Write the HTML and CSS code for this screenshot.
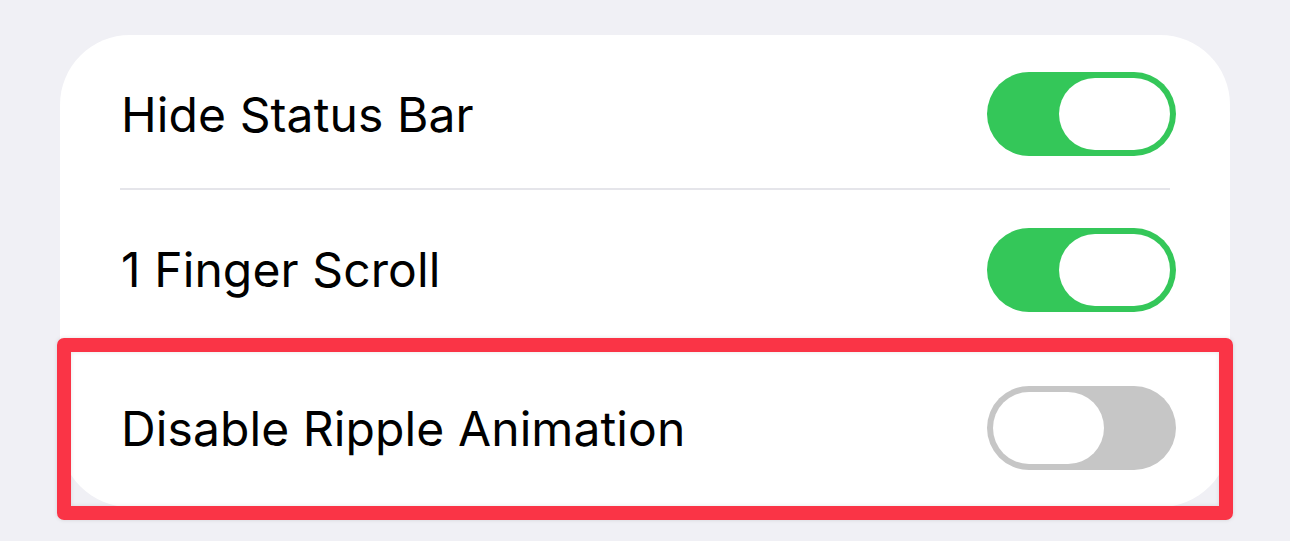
FILE: index.html
```html
<!DOCTYPE html>
<html>
<head>
<meta charset="utf-8">
<link rel="stylesheet" href="styles.css">
</head>
<body>
<div class="page">
  <div class="card">
    <div class="row row-first">
      <span class="label">Hide Status Bar</span>
      <span class="toggle on"><span class="knob"></span></span>
    </div>
    <div class="sep"></div>
    <div class="row row-mid">
      <span class="label">1 Finger Scroll</span>
      <span class="toggle on"><span class="knob"></span></span>
    </div>
    <div class="row row-last">
      <span class="label">Disable Ripple Animation</span>
      <span class="toggle off"><span class="knob"></span></span>
    </div>
  </div>
  <div class="highlight"></div>
</div>
</body>
</html>
```
FILE: styles.css
```css
html, body {
  margin: 0;
  padding: 0;
  background: #f0f0f5;
}
body {
  width: 1290px;
  height: 541px;
  overflow: hidden;
  font-family: "Inter", "Noto Sans", sans-serif;
}
.page {
  position: relative;
  padding: 35px 60px 0 60px;
}
.card {
  background: #ffffff;
  border-radius: 70px;
  display: flex;
  flex-direction: column;
}
.row {
  display: flex;
  align-items: center;
  justify-content: space-between;
  padding: 0 54px 0 61px;
}
.row-first {
  height: 148px;
  padding-top: 5px;
}
.row-mid {
  height: 159px;
}
.row-last {
  height: 158px;
}
.sep {
  height: 2px;
  background: #e5e5ea;
  margin: 0 60px;
}
.label {
  font-size: 48px;
  color: #000;
  letter-spacing: 0.1px;
}
.toggle {
  width: 189px;
  height: 84px;
  border-radius: 42px;
  display: flex;
  align-items: center;
  padding: 0 6px;
  box-sizing: border-box;
}
.toggle.on {
  background: #34c759;
  justify-content: flex-end;
}
.toggle.off {
  background: #c6c6c6;
  justify-content: flex-start;
}
.knob {
  width: 111px;
  height: 72px;
  border-radius: 36px;
  background: #ffffff;
}
.highlight {
  position: absolute;
  left: 57px;
  top: 338px;
  width: 1176px;
  height: 182px;
  box-sizing: border-box;
  border: 14px solid #fa3446;
  border-radius: 7px;
  box-shadow: 0 0 4px rgba(0,0,0,0.12), inset 0 0 4px rgba(0,0,0,0.10);
}
```
